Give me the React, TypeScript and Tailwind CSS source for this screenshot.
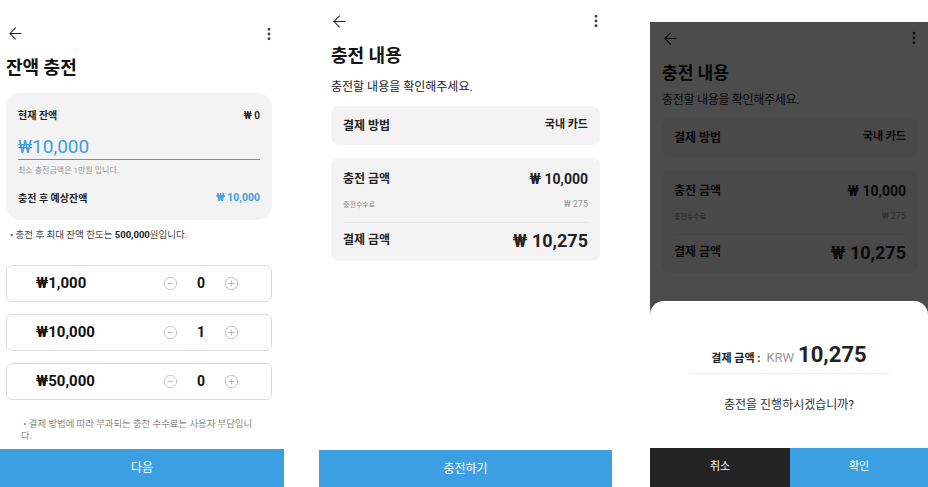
import React from 'react';
import { ArrowLeft, EllipsisVertical, CircleMinus, CirclePlus } from 'lucide-react';

const font = "font-['Roboto','Noto_Sans_CJK_KR',sans-serif]";

type Denom = { label: string; count: number };

const denoms: Denom[] = [
  { label: '₩1,000', count: 0 },
  { label: '₩10,000', count: 1 },
  { label: '₩50,000', count: 0 },
];

const TopBar: React.FC<{ className?: string }> = ({ className }) => (
  <div className={`flex items-center justify-between ${className ?? ''}`}>
    <ArrowLeft size={19} strokeWidth={1.3} className="text-[#222] -ml-[3px]" />
    <EllipsisVertical size={16} strokeWidth={2.4} className="text-[#444]" />
  </div>
);

// 1) balance charge screen
const ChargeScreen: React.FC = () => (
  <div className="w-[284px] h-[487px] flex flex-col bg-white shrink-0">
    <TopBar className="pl-[9px] pr-[7px] pt-[26px] h-[41px]" />
    <h1 className="px-[6px] mt-[16px] text-[18px] leading-[22px] font-bold text-[#111]">잔액 충전</h1>

    <div className="ml-[6px] w-[266px] mt-[14px] h-[127px] rounded-[15px] bg-[#f3f3f3] px-[12px] pt-[15px]">
      <div className="flex justify-between items-center h-[14px] text-[10px] font-semibold text-[#222]">
        <span>현재 잔액</span>
        <span>₩ 0</span>
      </div>
      <div className="mt-[14px] h-[24px] flex items-center border-b-[1.5px] border-[#3b9fe0] text-[19px] text-[#3b9fe0]">
        ₩10,000
      </div>
      <div className="mt-[6px] text-[8px] leading-[10px] text-[#999]">최소 충전금액은 1만원 입니다.</div>
      <div className="mt-[15px] flex justify-between items-center h-[14px] text-[10px] font-bold">
        <span className="text-[#222]">충전 후 예상잔액</span>
        <span className="text-[10.5px] text-[#3b9fe0]">₩ 10,000</span>
      </div>
    </div>

    <p className="mt-[9px] pl-[10px] text-[9.5px] leading-[12px] text-[#444]">
      • 충전 후 최대 잔액 한도는 <b className="text-[#222]">500,000</b>원입니다.
    </p>

    <div className="mt-[24px] flex flex-col gap-[12px] pl-[6px]">
      {denoms.map(d => (
        <div
          key={d.label}
          className="w-[266px] h-[37px] rounded-[6px] border border-[#dcdcdc] flex items-center pl-[29px] pr-[32px]"
        >
          <span className="text-[15px] font-bold text-[#111]">{d.label}</span>
          <div className="ml-auto flex items-center">
            <CircleMinus size={15} strokeWidth={1} className="text-[#aaa]" />
            <span className="w-[46px] text-center text-[14px] font-bold text-[#111]">{d.count}</span>
            <CirclePlus size={15} strokeWidth={1} className="text-[#999]" />
          </div>
        </div>
      ))}
    </div>

    <p className="mt-[18px] pl-[21px] text-[9.4px] leading-[12px] text-[#888]">
      &nbsp;• 결제 방법에 따라 부과되는 충전 수수료는 사용자 부담입니
      <br />
      다.
    </p>

    <button className="mt-auto h-[38px] w-full bg-[#3c9fe1] text-white text-[12px]">다음</button>
  </div>
);

const Summary: React.FC = () => (
  <>
    <div className="h-[39px] rounded-[8px] bg-[#f3f3f3] px-[12px] flex items-center justify-between text-[12px] font-bold text-[#222]">
      <span>결제 방법</span>
      <span className="text-[11px]">국내 카드</span>
    </div>
    <div className="mt-[13px] rounded-[8px] bg-[#f3f3f3] px-[12px] pt-[13px] pb-[10px]">
      <div className="flex justify-between items-center h-[16px] text-[#222] font-bold">
        <span className="text-[12px]">충전 금액</span>
        <span className="text-[14px]">₩ 10,000</span>
      </div>
      <div className="mt-[13px] flex justify-between items-center h-[10px] text-[7px] text-[#888]">
        <span>충전수수료</span>
        <span className="text-[9px] text-[#999]">₩ 275</span>
      </div>
      <div className="mt-[12px] border-t border-[#e8e8e8]" />
      <div className="mt-[6px] flex justify-between items-center h-[22px] text-[#222] font-bold">
        <span className="text-[12px]">결제 금액</span>
        <span className="text-[18px]">₩ 10,275</span>
      </div>
    </div>
  </>
);

// 2) confirmation screen
const ConfirmScreen: React.FC = () => (
  <div className="w-[293px] h-[487px] flex flex-col bg-white shrink-0">
    <TopBar className="pl-[14px] pr-[8px] pt-[14px] h-[28px]" />
    <div className="px-[12px]">
      <h1 className="mt-[17px] text-[18px] leading-[22px] font-bold text-[#111]">충전 내용</h1>
      <p className="mt-[12px] text-[12px] leading-[16px] text-[#222]">충전할 내용을 확인해주세요.</p>
      <div className="mt-[11px]">
        <Summary />
      </div>
    </div>
    <button className="mt-auto h-[37px] w-full bg-[#3c9fe1] text-white text-[12px]">충전하기</button>
  </div>
);

// 3) confirmation with bottom sheet
const SheetScreen: React.FC = () => (
  <div className="w-[278px] h-[487px] flex flex-col bg-white shrink-0 overflow-hidden">
    <div className="h-[22px]" />
    <div className="relative flex-1 bg-white">
      <TopBar className="pl-[14px] pr-[6px] pt-[9px] h-[23px]" />
      <div className="pl-[12px] pr-[10px]">
        <h1 className="mt-[17px] text-[17px] leading-[22px] font-bold text-[#111]">충전 내용</h1>
        <p className="mt-[8px] text-[12px] leading-[16px] tracking-[-0.3px] text-[#222]">충전할 내용을 확인해주세요.</p>
        <div className="mt-[10px]">
          <Summary />
        </div>
      </div>

      <div className="absolute inset-0 bg-black/70" />

      <div className="absolute left-0 right-0 bottom-0 flex flex-col">
        <div className="h-[147px] bg-white rounded-t-[14px] flex flex-col items-center">
          <div className="mt-[43px] h-[22px] flex items-baseline gap-[4px]">
            <span className="text-[11px] font-bold text-[#222]">결제 금액 :</span>
            <span className="text-[13px] text-[#999] ml-[2px]">KRW</span>
            <span className="text-[22px] font-bold text-[#222] leading-[22px]">10,275</span>
          </div>
          <div className="mt-[7px] w-[200px] border-t border-[#eeeeee]" />
          <p className="mt-[23px] text-[12px] leading-[16px] text-[#333]">충전을 진행하시겠습니까?</p>
        </div>
        <div className="flex h-[39px] text-[11px] text-white">
          <button className="w-[140px] bg-[#232323]">취소</button>
          <button className="flex-1 bg-[#3c9fe1]">확인</button>
        </div>
      </div>
    </div>
  </div>
);

const App: React.FC = () => {
  return (
    <div className={`w-[928px] h-[487px] flex bg-white overflow-hidden ${font}`}>
      <ChargeScreen />
      <div className="w-[35px] shrink-0" />
      <ConfirmScreen />
      <div className="w-[38px] shrink-0" />
      <SheetScreen />
    </div>
  );
};

export default App;
